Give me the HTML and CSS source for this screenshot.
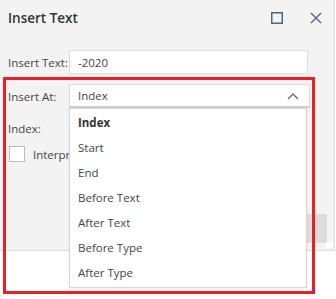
FILE: index.html
```html
<!DOCTYPE html>
<html lang="en">
  <head>
    <meta charset="UTF-8" />
    <title>Insert Text</title>
    <link rel="stylesheet" href="styles.css">
  </head>
  <body>
    <div class="dialog">
      <div class="titlebar">
        <span class="title">Insert Text</span>
        <div class="title-buttons">
          <svg width="12" height="12" viewBox="0 0 12 12"><rect x="0.75" y="0.75" width="10.5" height="10.5" fill="none" stroke="#4a6781" stroke-width="1.5"/></svg>
          <svg width="12" height="12" viewBox="0 0 12 12"><path d="M1 1 L11 11 M11 1 L1 11" stroke="#4a6781" stroke-width="1.4" fill="none"/></svg>
        </div>
      </div>
      <div class="form">
        <div class="row">
          <label class="label">Insert Text:</label>
          <div class="field">-2020</div>
        </div>
        <div class="row row-at">
          <label class="label">Insert At:</label>
          <div class="field select">
            <span>Index</span>
            <svg width="12" height="8" viewBox="0 0 12 8"><path d="M1 7 L6 2 L11 7" stroke="#666" stroke-width="1.3" fill="none"/></svg>
          </div>
        </div>
        <div class="row row-index">
          <label class="label">Index:</label>
        </div>
        <div class="row row-check">
          <span class="checkbox"></span>
          <label class="check-label">Interpret as expression</label>
        </div>
        <div class="footer">
          <span class="btn"></span>
        </div>
      </div>
      <span class="grip"></span>
    </div>
    <ul class="dropdown">
      <li class="selected">Index</li>
      <li>Start</li>
      <li>End</li>
      <li>Before Text</li>
      <li>After Text</li>
      <li>Before Type</li>
      <li>After Type</li>
    </ul>
    <div class="highlight"></div>
  </body>
</html>
```

FILE: styles.css
```css
body {
  margin: 0;
  background: #fff;
  font-family: 'Open Sans', sans-serif;
  font-size: 11.5px;
  color: #444;
  position: relative;
  width: 336px;
  height: 299px;
  overflow: hidden;
}
.dialog {
  width: 334px;
  height: 250px;
  background: #f3f3f3;
  border-right: 1px solid #dcdcdc;
  border-bottom: 1px solid #dcdcdc;
  position: relative;
}
.titlebar {
  height: 35px;
  display: flex;
  align-items: center;
  justify-content: space-between;
  padding: 0 12px 0 8px;
}
.title {
  font-size: 13.5px;
  font-weight: 600;
  color: #333;
}
.title-buttons {
  display: flex;
  gap: 27px;
  padding-top: 1px;
}
.form {
  padding: 15px 0 0 8px;
}
.row {
  display: flex;
  align-items: center;
  height: 24px;
}
.label {
  width: 61px;
  white-space: nowrap;
}
.field {
  width: 221px;
  height: 22px;
  background: #fff;
  border: 1px solid #dcdcdc;
  padding: 0 8px;
  display: flex;
  align-items: center;
}
.row-at {
  margin-top: 10px;
}
.select {
  justify-content: space-between;
  border-bottom: 2px solid #cfcfcf;
  height: 21px;
  padding-right: 10px;
}
.row-index {
  margin-top: 8px;
}
.row-check {
  margin-top: 2px;
}
.checkbox {
  width: 14px;
  height: 14px;
  border: 1px solid #bbb;
  background: #fff;
  margin-left: 1px;
}
.check-label {
  margin-left: 8px;
  width: 36px;
  overflow: hidden;
  white-space: nowrap;
}
.footer {
  display: flex;
  justify-content: flex-end;
  padding-right: 7px;
  margin-top: 48px;
}
.btn {
  width: 60px;
  height: 29px;
  background: #dcdcdc;
}
.grip {
  position: absolute;
  right: 2px;
  bottom: 2px;
  width: 6px;
  height: 6px;
  background: radial-gradient(circle, #fff 0.8px, transparent 1px) 0 0 / 2px 2px;
}
.dropdown {
  position: absolute;
  left: 69px;
  top: 108px;
  width: 236px;
  height: 177px;
  margin: 0;
  padding: 1px 0 0;
  list-style: none;
  background: #fff;
  border: 1px solid #d6d6d6;
  box-shadow: 0 1px 2px rgba(0, 0, 0, 0.08);
}
.dropdown li {
  height: 25px;
  line-height: 25px;
  padding-left: 8px;
}
.dropdown .selected {
  font-weight: bold;
  color: #333;
}
.highlight {
  position: absolute;
  left: 3px;
  top: 77px;
  width: 306px;
  height: 211px;
  border: 3px solid #e8202a;
}
```
